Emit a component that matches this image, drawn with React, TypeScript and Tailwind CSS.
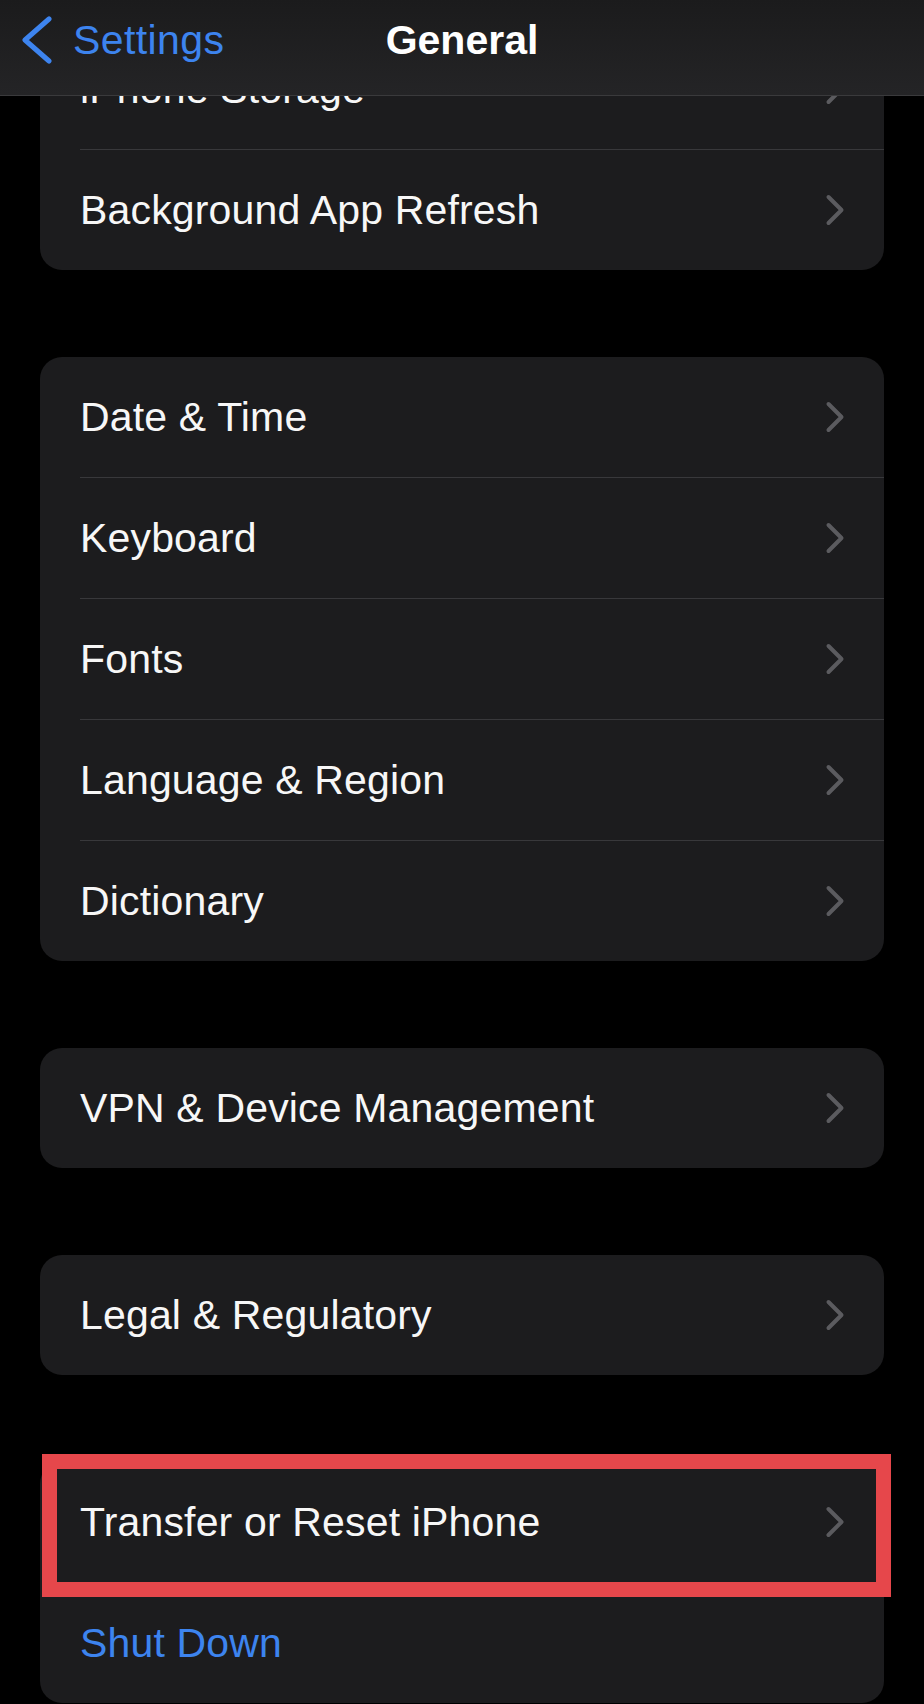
import type { ReactNode } from "react";

type SettingsRow = {
  label: string;
  action?: boolean;
  highlighted?: boolean;
};

const groups: SettingsRow[][] = [
  [{ label: "iPhone Storage" }, { label: "Background App Refresh" }],
  [
    { label: "Date & Time" },
    { label: "Keyboard" },
    { label: "Fonts" },
    { label: "Language & Region" },
    { label: "Dictionary" },
  ],
  [{ label: "VPN & Device Management" }],
  [{ label: "Legal & Regulatory" }],
  [
    { label: "Transfer or Reset iPhone", highlighted: true },
    { label: "Shut Down", action: true },
  ],
];

function Chevron() {
  return (
    <svg width="20" height="32" viewBox="0 0 20 32" fill="none" className="shrink-0">
      <path
        d="M3.5 3 L16.5 16 L3.5 29"
        stroke="#5b5b5f"
        strokeWidth="4"
        strokeLinecap="round"
        strokeLinejoin="round"
      />
    </svg>
  );
}

function BackChevron() {
  return (
    <svg width="32" height="48" viewBox="0 0 32 48" fill="none" className="shrink-0">
      <path
        d="M28 3 L4 24 L28 45"
        stroke="#3d84ef"
        strokeWidth="5"
        strokeLinecap="round"
        strokeLinejoin="round"
      />
    </svg>
  );
}

function Row({ row, last }: { row: SettingsRow; last: boolean }) {
  return (
    <div>
      <div className="flex h-[120px] items-center justify-between pl-[40px] pr-[39px]">
        <span
          className={
            row.action
              ? "text-[41px] leading-none tracking-[0.004em] text-[#3d84ef]"
              : "text-[41px] leading-none tracking-[0.004em] text-[#f7f7f7]"
          }
        >
          {row.label}
        </span>
        {!row.action && <Chevron />}
      </div>
      {!last && <div className="ml-[40px] h-px bg-[#38383b]" />}
    </div>
  );
}

function Card({ children }: { children: ReactNode }) {
  return <div className="relative rounded-[22px] bg-[#1c1c1e]">{children}</div>;
}

export default function App() {
  return (
    <div className="relative h-[1704px] w-[924px] overflow-hidden bg-black font-['Liberation_Sans',Arial,sans-serif]">
      <header className="absolute inset-x-0 top-0 z-10 grid h-[96px] grid-cols-[1fr_auto_1fr] items-start border-b border-[#3a3a3c] bg-gradient-to-b from-[#1b1b1c] to-[#242426] pt-[16px]">
        <div className="flex items-center pl-[21px]">
          <BackChevron />
          <span className="ml-[20px] text-[41px] leading-none tracking-[0.01em] text-[#3d84ef]">
            Settings
          </span>
        </div>
        <h1 className="pt-[4px] text-[41px] font-bold leading-none text-white">General</h1>
        <div />
      </header>

      <main className="flex flex-col gap-[87px] px-[40px] pt-[29px]">
        {groups.map((rows, gi) => (
          <Card key={gi}>
            {rows.map((row, ri) => (
              <Row key={row.label} row={row} last={ri === rows.length - 1} />
            ))}
            {rows.some((r) => r.highlighted) && (
              <div className="absolute -top-[8px] left-[2px] h-[143px] w-[849px] border-[15px] border-[#e6474b]" />
            )}
          </Card>
        ))}
      </main>
    </div>
  );
}
